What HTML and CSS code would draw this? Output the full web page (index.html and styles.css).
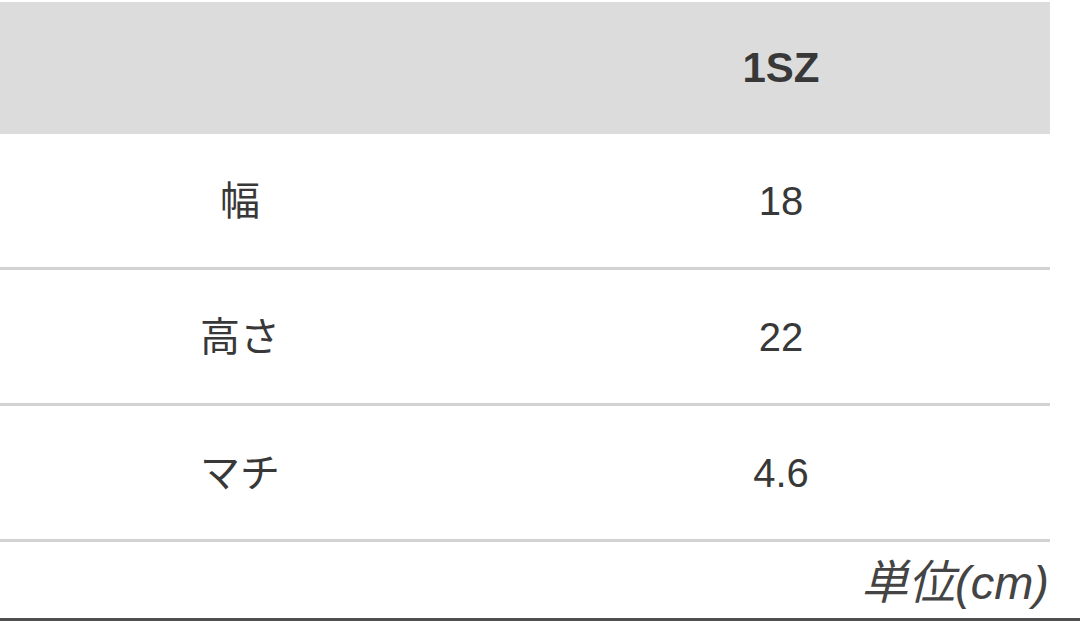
FILE: index.html
```html
<!DOCTYPE html>
<html lang="ja">
<head>
<meta charset="utf-8">
<link rel="stylesheet" href="styles.css">
</head>
<body>
<div class="page">
  <div class="table">
    <div class="row head">
      <div class="cell"></div>
      <div class="cell bold">1SZ</div>
    </div>
    <div class="row">
      <div class="cell">幅</div>
      <div class="cell">18</div>
    </div>
    <div class="row">
      <div class="cell">高さ</div>
      <div class="cell">22</div>
    </div>
    <div class="row">
      <div class="cell">マチ</div>
      <div class="cell">4.6</div>
    </div>
  </div>
  <div class="unit">単位(cm)</div>
</div>
</body>
</html>
```
FILE: styles.css
```css
html, body {
  margin: 0;
  padding: 0;
  background: #ffffff;
}
.page {
  width: 1080px;
  height: 621px;
  overflow: hidden;
  box-sizing: border-box;
  padding-top: 2px;
  border-bottom: 3px solid #505050;
  font-family: "Liberation Sans", "Noto Sans CJK JP", sans-serif;
  color: #383838;
  background: #ffffff;
}
.table {
  margin-left: -32px;
  width: 1082px;
}
.row {
  display: grid;
  grid-template-columns: 544px 538px;
  height: 133px;
  border-bottom: 3px solid #d2d2d2;
}
.row.head {
  height: 132px;
  border-bottom: none;
  background: #dcdcdc;
}
.cell {
  display: flex;
  align-items: center;
  justify-content: center;
  font-size: 40px;
  line-height: 1;
}
.cell.bold {
  font-weight: bold;
  font-size: 42px;
}
.unit {
  width: 1049px;
  text-align: right;
  font-style: italic;
  font-size: 47px;
  line-height: 1;
  color: #444444;
  padding-top: 17px;
}
```
